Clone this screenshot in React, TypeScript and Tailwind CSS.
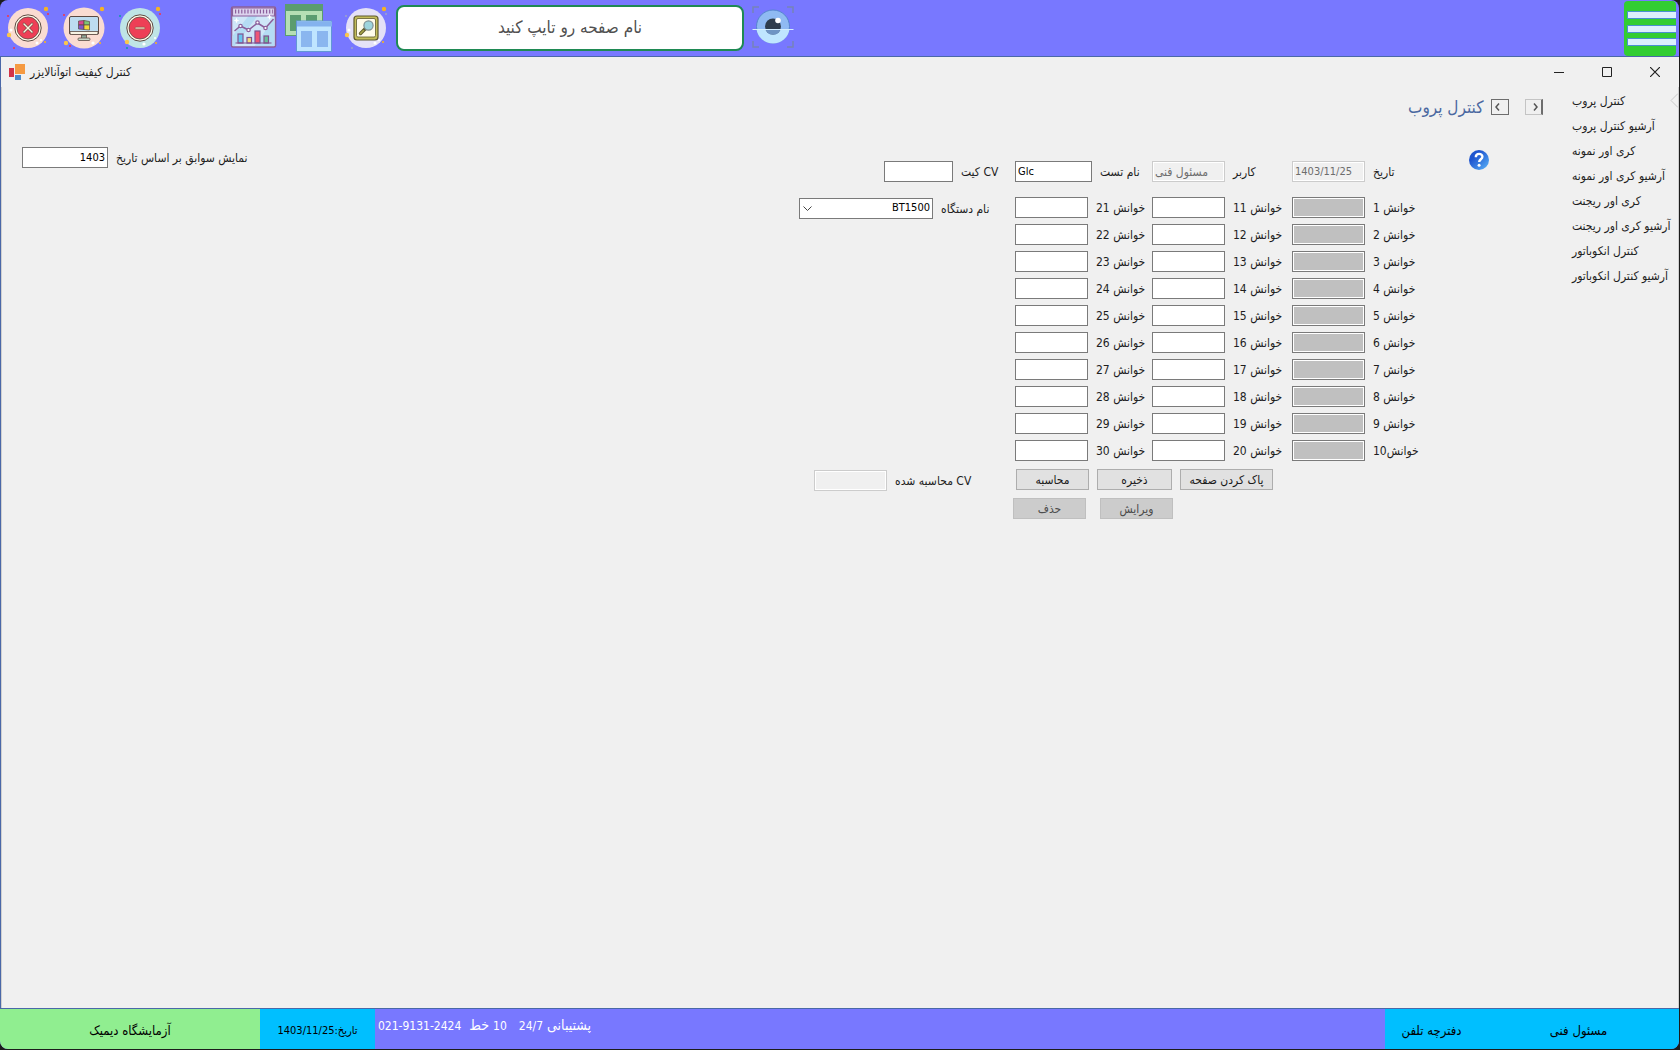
import { clsx } from 'clsx';
import { useState } from 'react';
import type { ReactNode } from 'react';

const menuItems = [
  'کنترل پروب',
  'آرشیو کنترل پروب',
  'کری اور نمونه',
  'آرشیو کری اور نمونه',
  'کری اور ریجنت',
  'آرشیو کری اور ریجنت',
  'کنترل انکوباتور',
  'آرشیو کنترل انکوباتور',
];

const rows = Array.from({ length: 10 }, (_, i) => i + 1);

const inputBase = 'h-[21px] shrink-0 border px-[2px] outline-none';
const inputNormal = 'border-[#7a7a7a] bg-white text-black';
const inputDisabled = 'border-[#cccccc] bg-[#f0f0f0] text-[#6d6d6d] shadow-[inset_0_0_0_1px_#ffffff]';
const inputLocked = 'border-[#7a7a7a] bg-[#c0c0c0] shadow-[inset_0_0_0_1px_#ffffff]';

type FieldProps = {
  id: string;
  label: string;
  width?: string;
  look?: string;
  textSize?: string;
  value?: string;
  disabled?: boolean;
};

function Field({
  id,
  label,
  width = 'w-[73px]',
  look = inputNormal,
  textSize = 'text-[11px]',
  value,
  disabled,
}: FieldProps) {
  return (
    <div className="flex items-center gap-2">
      <input
        id={id}
        type="text"
        defaultValue={value}
        disabled={disabled}
        className={clsx(inputBase, width, look, textSize)}
      />
      <label htmlFor={id} dir="rtl" className="whitespace-nowrap">
        {label}
      </label>
    </div>
  );
}

function IconButton({ label, className, children }: { label: string; className?: string; children: ReactNode }) {
  return (
    <button type="button" aria-label={label} className={clsx('shrink-0', className)}>
      {children}
    </button>
  );
}

function Sparks({ accent }: { accent: string }) {
  return (
    <>
      <circle cx="40" cy="3" r="2.2" fill="#f5b324" />
      <circle cx="3" cy="29" r="2.2" fill="#fbc64a" />
      <circle cx="39" cy="36" r="1.1" fill="#f5b324" />
      <circle cx="2" cy="10" r="1.1" fill={accent} />
      <circle cx="42" cy="8" r="1.1" fill={accent} />
      <circle cx="8" cy="42" r="1.1" fill={accent} />
      <circle cx="5" cy="24" r="1.5" fill="#fff" />
      <circle cx="31" cy="37" r="1.5" fill="#fff" />
      <circle cx="35" cy="34" r="1" fill="#fff" />
    </>
  );
}

function CloseIcon() {
  return (
    <svg width="44" height="44" viewBox="0 0 44 44">
      <circle cx="22" cy="22" r="20" fill="#fadcd2" />
      <Sparks accent="#ee3a52" />
      <circle cx="22" cy="22" r="13.2" fill="#fffbe9" stroke="#5c4a42" strokeWidth="1" />
      <circle cx="22" cy="22" r="11" fill="#ee3f56" stroke="#5c4a42" strokeWidth="0.8" />
      <path d="M18 18l8 8M26 18l-8 8" stroke="#6b4a42" strokeWidth="2.6" strokeLinecap="round" />
      <path d="M18 18l8 8M26 18l-8 8" stroke="#fdf0dc" strokeWidth="1.5" strokeLinecap="round" />
    </svg>
  );
}

function DesktopIcon() {
  return (
    <svg width="44" height="44" viewBox="0 0 44 44">
      <circle cx="22" cy="22" r="20.5" fill="#fadcd2" />
      <circle cx="40" cy="3" r="2.2" fill="#f5b324" />
      <circle cx="4" cy="37" r="2.2" fill="#fbc64a" />
      <circle cx="38" cy="37" r="1.1" fill="#f5b324" />
      <circle cx="2" cy="9" r="1.1" fill="#ee3a52" />
      <circle cx="8" cy="40" r="1.1" fill="#ee3a52" />
      <circle cx="31" cy="37" r="1.6" fill="#fff" />
      <rect x="7.5" y="10.5" width="29" height="18" rx="1.5" fill="#bddcf0" stroke="#5c4a42" />
      <path d="M8 25.5h28v1.5a1.5 1.5 0 0 1-1.5 1.5h-25A1.5 1.500 0 0 1 8 27z" fill="#f7f3e4" stroke="#5c4a42" strokeWidth="0.8" />
      <path d="M19.5 29h5v4h-5z" fill="#8fa89a" stroke="#5c4a42" strokeWidth="0.8" />
      <rect x="16" y="32" width="12" height="2.500" rx="1" fill="#c7d7c8" stroke="#5c4a42" strokeWidth="0.8" />
      <g stroke="#5c4a42" strokeWidth="0.7">
        <path d="M16.500 15l5.500-.5v4.500h-5.500z" fill="#d9468f" />
        <path d="M22 14.500l5.500 1v3.500H22z" fill="#7cc576" />
        <path d="M16.500 19H22v4.500l-5.500-.5z" fill="#8257c9" />
        <path d="M22 19h5.500v5L22 23.500z" fill="#f3dc3c" />
      </g>
    </svg>
  );
}

function MinusIcon() {
  return (
    <svg width="44" height="44" viewBox="0 0 44 44">
      <circle cx="22" cy="22" r="20" fill="#bfe4e6" />
      <circle cx="40" cy="3" r="2.2" fill="#f5b324" />
      <circle cx="9" cy="36" r="2.2" fill="#fbc64a" />
      <circle cx="38" cy="37" r="1.1" fill="#f5b324" />
      <circle cx="2" cy="10" r="1.1" fill="#149aa8" />
      <circle cx="42" cy="8" r="1.1" fill="#ee3a52" />
      <circle cx="9" cy="42" r="1.1" fill="#149aa8" />
      <circle cx="26" cy="38" r="1.6" fill="#fff" />
      <circle cx="37" cy="32" r="1" fill="#fff" />
      <circle cx="22" cy="22" r="13.2" fill="#fffbe9" stroke="#5c4a42" />
      <circle cx="22" cy="22" r="11" fill="#ee3f56" stroke="#5c4a42" strokeWidth="0.8" />
      <rect x="17" y="21" width="10" height="2.2" rx="1" fill="#e3c8ae" stroke="#8a5348" strokeWidth="0.6" />
    </svg>
  );
}

function ChartIcon() {
  return (
    <svg width="47" height="42" viewBox="0 0 46 42">
      <rect x="1" y="1" width="44" height="40" rx="1.5" fill="#cfe6f8" stroke="#8b5f9b" strokeWidth="1.6" />
      <path d="M24 40L44 12v28zM2 30L18 10h9L4 40H2z" fill="#b5dcf4" />
      <path d="M2 2h42v8H2z" fill="#dcd3ee" stroke="#8b5f9b" strokeWidth="1.2" />
      <path d="M4.5 5.500h38" stroke="#8b5f9b" strokeWidth="4" strokeDasharray="1.2 1.900" />
      <path d="M6 11.500l.8 2.200 2.200.8-2.200.8L6 17.500l-.8-2.200-2.200-.8 2.200-.8zM39 8l.8 2.200 2.200.8-2.200.8-.8 2.200-.8-2.200-2.200-.8 2.200-.8z" fill="#fff" />
      <path d="M4 25l6-5 8 4 9-7 8 5 8-9" fill="none" stroke="#8b5f9b" strokeWidth="1.5" />
      <g fill="#fff" stroke="#8b5f9b" strokeWidth="1.2">
        <circle cx="10" cy="20" r="1.700" />
        <circle cx="18" cy="24" r="1.700" />
        <circle cx="27" cy="16.500" r="1.700" />
        <circle cx="35" cy="22" r="1.700" />
      </g>
      <g stroke="#80528f" strokeWidth="1.2">
        <rect x="7.500" y="28" width="5" height="9" fill="#68c5ee" />
        <rect x="16.500" y="31.500" width="4.500" height="5.500" fill="#f7dc78" />
        <rect x="24.500" y="25" width="5" height="12" fill="#ee5776" />
        <rect x="33.500" y="30" width="4.500" height="7" fill="#69bf9c" />
        <path d="M5 37h36" />
      </g>
    </svg>
  );
}

function WindowsIcon() {
  return (
    <svg width="47" height="48" viewBox="0 0 47 48">
      <rect x="0.500" y="0.500" width="37" height="31" fill="#b5dfb4" stroke="#5b9c70" />
      <rect width="38" height="7" fill="#5b9c70" />
      <path d="M5 11h11v16H5zM21 11h11v16H21z" fill="#5b9c70" />
      <rect x="11.500" y="17" width="35" height="30.500" fill="#bfe5ff" stroke="#6396d6" />
      <rect x="12" y="17.500" width="35" height="5" fill="#84b2ee" />
      <path d="M16 27h11v16H16zM32 27h11v16H32z" fill="#8ab6ef" />
    </svg>
  );
}

function SearchPageIcon() {
  return (
    <svg width="44" height="44" viewBox="0 0 44 44">
      <circle cx="22" cy="22" r="20" fill="#e4e1f7" />
      <Sparks accent="#9aa0cf" />
      <rect x="10" y="10" width="24" height="24" rx="3" fill="#c2bc5a" stroke="#5f5a2e" strokeWidth="1.2" />
      <rect x="12.500" y="12.500" width="19" height="18.500" rx="1.500" fill="#fffbea" stroke="#5f5a2e" strokeWidth="0.8" />
      <path d="M21 23l-4.500 4.500" stroke="#5f5a2e" strokeWidth="3.400" strokeLinecap="round" />
      <path d="M19.500 24.500l-3 3" stroke="#a9a548" strokeWidth="1.600" strokeLinecap="round" />
      <circle cx="24.500" cy="19.500" r="4.600" fill="#9ed4dc" stroke="#7d8f93" strokeWidth="1.200" />
    </svg>
  );
}

function EyeIcon() {
  return (
    <svg width="42" height="42" viewBox="0 0 42 42" fill="none">
      <path d="M1 7V1h6M35 1h6v6M1 35v6h6M35 41h6v-6" stroke="#7583b8" strokeWidth="1.500" />
      <circle cx="21" cy="20.500" r="16.500" fill="#8fbaf2" stroke="#5585cf" />
      <path d="M4.500 23.500a16.700 16.700 0 0 0 33 0z" fill="#bfe6ff" />
      <circle cx="21" cy="20.500" r="8" fill="#2f3d4d" />
      <path d="M13.500 23.500a8 8 0 0 0 15 0z" fill="#6e94c4" />
      <circle cx="26" cy="14.500" r="2.800" fill="#fff" />
      <path d="M.5 23.500h41" stroke="#d4eeff" strokeWidth="1.200" />
    </svg>
  );
}

function MenuIcon() {
  return (
    <svg width="52" height="56" viewBox="0 0 52 56">
      <rect y="1" width="52" height="55" rx="4" fill="#32cd32" />
      <path
        d="M52 11.500H3.500v7H52M52 25.500H3.500v7H52M52 38.500H3.500v7H52"
        fill="#dceffd"
        stroke="#4a90d0"
        strokeWidth="1"
      />
    </svg>
  );
}

function TopBar() {
  return (
    <header className="flex h-14 items-center bg-[#7878ff] pr-[3px] pl-[6px]">
      <div className="flex items-center gap-3">
        <IconButton label="بستن">
          <CloseIcon />
        </IconButton>
        <IconButton label="میز کار">
          <DesktopIcon />
        </IconButton>
        <IconButton label="کوچک کردن">
          <MinusIcon />
        </IconButton>
      </div>
      <div className="ml-[68px] flex items-center gap-2">
        <IconButton label="نمودار" className="pb-[2px]">
          <ChartIcon />
        </IconButton>
        <IconButton label="پنجره‌ها">
          <WindowsIcon />
        </IconButton>
        <IconButton label="جستجو" className="ml-1">
          <SearchPageIcon />
        </IconButton>
        <input
          type="text"
          dir="rtl"
          aria-label="نام صفحه"
          placeholder="نام صفحه رو تایپ کنید"
          className="h-[46px] w-[348px] rounded-lg border-2 border-[#1f8a54] bg-white px-3 pb-[2px] text-center text-[17px] text-[#505050] outline-none placeholder:text-[#505050]"
        />
        <IconButton label="نمایش" className="pb-[2px]">
          <EyeIcon />
        </IconButton>
      </div>
      <IconButton label="منو" className="ml-auto">
        <MenuIcon />
      </IconButton>
    </header>
  );
}

function TitleBar() {
  return (
    <div className="flex h-[30px] items-center justify-between pl-2">
      <div className="flex items-center gap-[5px]">
        <svg width="16" height="16" viewBox="0 0 16 16">
          <path d="M0 4h5v9H0z" fill="#d13448" />
          <path d="M6 0h10v10H6z" fill="#f59a42" />
          <path d="M6 11h6v5H6z" fill="#4a8bcb" />
        </svg>
        <h1 dir="rtl">کنترل کیفیت اتوآنالایزر</h1>
      </div>
      <div className="flex text-[#222222]">
        <button type="button" aria-label="Minimize" className="flex h-[30px] w-12 items-center justify-center">
          <svg width="10" height="10" viewBox="0 0 10 10">
            <path d="M0 5.500h10" stroke="currentColor" />
          </svg>
        </button>
        <button type="button" aria-label="Maximize" className="flex h-[30px] w-12 items-center justify-center">
          <svg width="10" height="10" viewBox="0 0 10 10">
            <path d="M.5.5h9v9h-9z" fill="none" stroke="currentColor" />
          </svg>
        </button>
        <button type="button" aria-label="Close" className="flex h-[30px] w-12 items-center justify-center">
          <svg width="10" height="10" viewBox="0 0 10 10">
            <path d="M0 0l10 10M10 0L0 10" stroke="currentColor" strokeWidth="1.200" />
          </svg>
        </button>
      </div>
    </div>
  );
}

function HelpIcon() {
  return (
    <svg width="20" height="20" viewBox="0 0 20 20">
      <defs>
        <linearGradient id="help" x1="0" y1="0" x2="1" y2="1">
          <stop offset="0.3" stopColor="#1f55cf" />
          <stop offset="1" stopColor="#5cb6fa" />
        </linearGradient>
      </defs>
      <circle cx="10" cy="10" r="10" fill="url(#help)" />
      <path d="M6.800 7.200c0-4.400 6.600-4.200 6.600-.4 0 2.400-3.200 2.600-3.200 5.200" fill="none" stroke="#fff" strokeWidth="2.400" />
      <circle cx="10.100" cy="15.200" r="1.500" fill="#fff" />
    </svg>
  );
}

function ActionButton({ children, width, disabled }: { children: ReactNode; width: string; disabled?: boolean }) {
  return (
    <button
      type="button"
      dir="rtl"
      disabled={disabled}
      className={clsx(
        'h-[21px] border whitespace-nowrap',
        width,
        disabled ? 'border-[#bfbfbf] bg-[#cccccc] text-[#4d4d4d]' : 'border-[#adadad] bg-[#e1e1e1] text-[#1a1a1a]',
      )}
    >
      {children}
    </button>
  );
}

function ProbeForm() {
  const [device, setDevice] = useState('BT1500');

  return (
    <form className="flex pt-[74px]">
      <div className="flex w-[216px] flex-col">
        <div className="pl-[85px]">
          <Field id="kit-cv" label="CV کیت" width="w-[69px]" />
        </div>
        <div className="mt-4 flex items-center gap-2">
          <div className="relative">
            <select
              id="device"
              dir="rtl"
              value={device}
              onChange={(e) => setDevice(e.target.value)}
              className="block h-[21px] w-[134px] appearance-none border border-[#7a7a7a] bg-white px-[2px] text-[11px] text-black outline-none"
            >
              <option>BT1500</option>
            </select>
            <svg className="pointer-events-none absolute top-2 left-1" width="9" height="6" viewBox="0 0 9 6">
              <path d="M.5.5l4 4 4-4" fill="none" stroke="#444" />
            </svg>
          </div>
          <label htmlFor="device" dir="rtl" className="whitespace-nowrap">
            نام دستگاه
          </label>
        </div>
        <div className="mt-auto mb-7 pl-[15px]">
          <Field id="calculated-cv" label="CV محاسبه شده" look={inputDisabled} disabled />
        </div>
      </div>

      <div>
        <div className="grid grid-cols-[137px_140px_138px]">
          <Field id="test" label="نام تست" width="w-[77px]" value="Glc" />
          <Field id="user" label="کاربر" look={inputDisabled} textSize="text-xs" value="مسئول فنی" disabled />
          <Field id="date" label="تاریخ" look={inputDisabled} value="1403/11/25" disabled />
        </div>
        <div className="mt-[15px] grid grid-cols-[137px_140px_138px] gap-y-[6px]">
          {rows.map((n) => (
            <div key={n} className="contents">
              <Field id={`reading-${n + 20}`} label={`خوانش ${n + 20}`} />
              <Field id={`reading-${n + 10}`} label={`خوانش ${n + 10}`} />
              <Field
                id={`reading-${n}`}
                label={n === 10 ? 'خوانش10' : `خوانش ${n}`}
                look={inputLocked}
                disabled
              />
            </div>
          ))}
        </div>
        <div className="mt-2 flex gap-2 pl-px">
          <ActionButton width="w-[73px]">محاسبه</ActionButton>
          <ActionButton width="w-[75px]">ذخیره</ActionButton>
          <ActionButton width="w-[93px]">پاک کردن صفحه</ActionButton>
        </div>
        <div className="mt-2 -ml-[2px] flex gap-[14px]">
          <ActionButton width="w-[73px]" disabled>
            حذف
          </ActionButton>
          <ActionButton width="w-[73px]" disabled>
            ویرایش
          </ActionButton>
        </div>
      </div>
    </form>
  );
}

function PageHeading() {
  return (
    <div className="w-[164px] shrink-0 pt-2">
      <div className="flex h-6 items-center justify-between pr-[29px]">
        <h2 dir="rtl" className="text-[17px] whitespace-nowrap text-[#4a68a0]">
          کنترل پروب
        </h2>
        <div className="flex gap-4">
          <button
            type="button"
            aria-label="Back"
            className="flex h-4 w-[18px] items-center border border-[#6d6d6d] pl-[3px]"
          >
            <svg width="5" height="8" viewBox="0 0 5 8">
              <path d="M4 .5L1 4l3 3.500" fill="none" stroke="#555" strokeWidth="1.500" />
            </svg>
          </button>
          <button
            type="button"
            aria-label="Forward"
            className="flex h-4 w-[18px] items-center justify-end border border-r-2 border-[#c4c4c4] border-r-[#6d6d6d] pr-[3px]"
          >
            <svg width="5" height="8" viewBox="0 0 5 8">
              <path d="M1 .5L4 4 1 7.500" fill="none" stroke="#555" strokeWidth="1.500" />
            </svg>
          </button>
        </div>
      </div>
      <button type="button" aria-label="راهنما" className="mt-[31px] ml-[61px] block">
        <HelpIcon />
      </button>
    </div>
  );
}

function SideMenu() {
  return (
    <nav className="relative w-[106px] shrink-0 pt-px">
      <ul>
        {menuItems.map((item) => (
          <li key={item} className="flex h-[25px] items-center">
            <a href="#" dir="rtl" className="whitespace-nowrap">
              {item}
            </a>
          </li>
        ))}
      </ul>
      <svg className="absolute top-[6px] right-0" width="8" height="15" viewBox="0 0 8 15">
        <path d="M8 .5L1 7.500l7 7" fill="none" stroke="#c8c8c8" />
      </svg>
    </nav>
  );
}

function StatusBar() {
  return (
    <footer className="flex h-10 shrink-0 bg-[#7878ff] text-[13px] text-black">
      <div dir="rtl" className="flex w-[260px] items-center justify-center bg-[#90ee90] pt-1">
        آزمایشگاه دیمیک
      </div>
      <div dir="rtl" className="flex w-[115px] items-center justify-center bg-[#00bfff] pt-1 text-[11px]">
        تاریخ:1403/11/25
      </div>
      <p dir="rtl" className="pt-[6px] pl-[3px] text-sm leading-5 whitespace-pre text-white">
        {'پشتیبانی '}
        <bdi className="text-xs">24/7</bdi>
        {'   '}
        <bdi className="text-xs">10</bdi>
        {' خط  '}
        <bdi dir="ltr" className="text-xs">
          021-9131-2424
        </bdi>
      </p>
      <div className="ml-auto flex w-[294px] items-center bg-[#00bfff] pt-1">
        <a href="#" dir="rtl" className="w-[93px] text-center">
          دفترچه تلفن
        </a>
        <span dir="rtl" className="flex-1 text-center">
          مسئول فنی
        </span>
      </div>
    </footer>
  );
}

export default function App() {
  return (
    <div className="flex min-h-screen bg-[#1c1c1c] pr-px pb-px font-['DejaVu_Sans_Condensed','DejaVu_Sans',sans-serif] text-xs text-[#1e1e1e]">
      <div className="flex flex-1 flex-col overflow-hidden rounded-lg">
        <TopBar />
        <main className="flex flex-1 flex-col border-y border-l border-[#4a68a8] bg-[#f0f0f0]">
          <TitleBar />
          <div className="flex flex-1 border-x border-[#d0d0d0]">
            <div className="mt-[60px] ml-5 flex h-[21px] items-center gap-2">
              <input
                id="history-year"
                type="text"
                dir="rtl"
                defaultValue="1403"
                className={clsx(inputBase, inputNormal, 'w-[86px] text-[11px]')}
              />
              <label htmlFor="history-year" dir="rtl" className="whitespace-nowrap">
                نمایش سوابق بر اساس تاریخ
              </label>
            </div>
            <div className="ml-auto flex">
              <div className="-mr-[22px]">
                <ProbeForm />
              </div>
              <PageHeading />
              <SideMenu />
            </div>
          </div>
        </main>
        <StatusBar />
      </div>
    </div>
  );
}
